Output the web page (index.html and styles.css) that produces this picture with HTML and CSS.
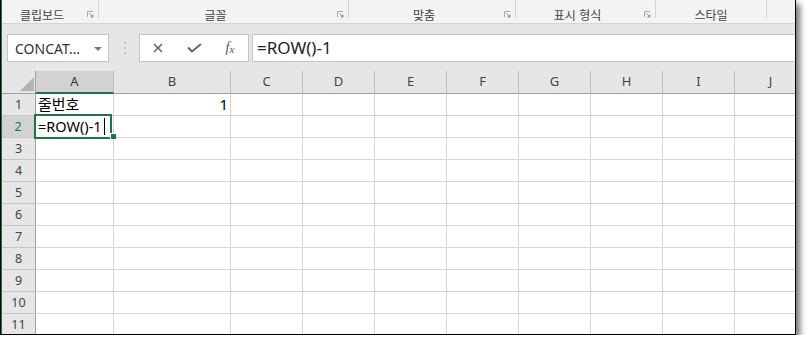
FILE: index.html
```html
<!DOCTYPE html>
<html lang="ko">
<head>
<meta charset="utf-8">
<title>Excel</title>
<link rel="stylesheet" href="styles.css">
</head>
<body>
<div class="frame">
 <div class="app">
  <div class="ribbon">
   <div class="group g1"><span class="glabel">클립보드</span><span class="launch"><svg width="7" height="7" viewBox="0 0 7 7"><path d="M0.5 6V0.5H6" fill="none" stroke="#a6a6a6"/><path d="M2.5 2.5L6 6M6 3.5V6H3.5" fill="none" stroke="#8a8a8a"/></svg></span></div>
   <div class="sep"></div>
   <div class="group g2"><span class="glabel">글꼴</span><span class="launch"><svg width="7" height="7" viewBox="0 0 7 7"><path d="M0.5 6V0.5H6" fill="none" stroke="#a6a6a6"/><path d="M2.5 2.5L6 6M6 3.5V6H3.5" fill="none" stroke="#8a8a8a"/></svg></span></div>
   <div class="sep"></div>
   <div class="group g3"><span class="glabel">맞춤</span><span class="launch"><svg width="7" height="7" viewBox="0 0 7 7"><path d="M0.5 6V0.5H6" fill="none" stroke="#a6a6a6"/><path d="M2.5 2.5L6 6M6 3.5V6H3.5" fill="none" stroke="#8a8a8a"/></svg></span></div>
   <div class="sep"></div>
   <div class="group g4"><span class="glabel">표시 형식</span><span class="launch"><svg width="7" height="7" viewBox="0 0 7 7"><path d="M0.5 6V0.5H6" fill="none" stroke="#a6a6a6"/><path d="M2.5 2.5L6 6M6 3.5V6H3.5" fill="none" stroke="#8a8a8a"/></svg></span></div>
   <div class="sep"></div>
   <div class="group g5"><span class="glabel">스타일</span></div>
   <div class="sep"></div>
   <div class="group rest"></div>
  </div>
  <div class="fbar">
   <div class="namebox"><span class="nbtext">CONCAT…</span><svg class="nbarrow" width="8" height="4" viewBox="0 0 8 4"><path d="M0 0H8L4 4Z" fill="#7a7a7a"/></svg></div>
   <div class="dots"><i></i><i></i><i></i></div>
   <div class="fbtns">
    <span class="fbtn"><svg width="10" height="10" viewBox="0 0 10 10"><path d="M1 1L9 9M9 1L1 9" stroke="#555" stroke-width="1.3" fill="none"/></svg></span>
    <span class="fbtn"><svg width="15" height="10" viewBox="0 0 15 10"><path d="M1 4.5L5 8.5L14 1" stroke="#666" stroke-width="2" fill="none"/></svg></span>
    <span class="fbtn"><span class="fx"><i>f</i><i class="fxx">x</i></span></span>
   </div>
   <div class="finput">=ROW()-1</div>
  </div>
  <div class="sheet">
   <div class="corner"><svg width="14" height="14" viewBox="0 0 14 14"><path d="M14 0V14H0Z" fill="#b4b4b4"/></svg></div>
   <div class="ch sel">A</div><div class="ch">B</div><div class="ch">C</div><div class="ch">D</div><div class="ch">E</div><div class="ch">F</div><div class="ch">G</div><div class="ch">H</div><div class="ch">I</div><div class="ch">J</div>

   <div class="rh">1</div><div class="c">줄번호</div><div class="c num">1</div><div class="c"></div><div class="c"></div><div class="c"></div><div class="c"></div><div class="c"></div><div class="c"></div><div class="c"></div><div class="c"></div>

   <div class="rh sel">2</div><div class="c active">=ROW()-1<span class="caret"></span><span class="selbox"></span><span class="handle"></span></div><div class="c"></div><div class="c"></div><div class="c"></div><div class="c"></div><div class="c"></div><div class="c"></div><div class="c"></div><div class="c"></div><div class="c"></div>

   <div class="rh">3</div><div class="c"></div><div class="c"></div><div class="c"></div><div class="c"></div><div class="c"></div><div class="c"></div><div class="c"></div><div class="c"></div><div class="c"></div><div class="c"></div>
   <div class="rh">4</div><div class="c"></div><div class="c"></div><div class="c"></div><div class="c"></div><div class="c"></div><div class="c"></div><div class="c"></div><div class="c"></div><div class="c"></div><div class="c"></div>
   <div class="rh">5</div><div class="c"></div><div class="c"></div><div class="c"></div><div class="c"></div><div class="c"></div><div class="c"></div><div class="c"></div><div class="c"></div><div class="c"></div><div class="c"></div>
   <div class="rh">6</div><div class="c"></div><div class="c"></div><div class="c"></div><div class="c"></div><div class="c"></div><div class="c"></div><div class="c"></div><div class="c"></div><div class="c"></div><div class="c"></div>
   <div class="rh">7</div><div class="c"></div><div class="c"></div><div class="c"></div><div class="c"></div><div class="c"></div><div class="c"></div><div class="c"></div><div class="c"></div><div class="c"></div><div class="c"></div>
   <div class="rh">8</div><div class="c"></div><div class="c"></div><div class="c"></div><div class="c"></div><div class="c"></div><div class="c"></div><div class="c"></div><div class="c"></div><div class="c"></div><div class="c"></div>
   <div class="rh">9</div><div class="c"></div><div class="c"></div><div class="c"></div><div class="c"></div><div class="c"></div><div class="c"></div><div class="c"></div><div class="c"></div><div class="c"></div><div class="c"></div>
   <div class="rh">10</div><div class="c"></div><div class="c"></div><div class="c"></div><div class="c"></div><div class="c"></div><div class="c"></div><div class="c"></div><div class="c"></div><div class="c"></div><div class="c"></div>
   <div class="rh">11</div><div class="c"></div><div class="c"></div><div class="c"></div><div class="c"></div><div class="c"></div><div class="c"></div><div class="c"></div><div class="c"></div><div class="c"></div><div class="c"></div>
  </div>
 </div>
</div>
</body>
</html>
```
FILE: styles.css
```css
html, body {
  margin: 0;
  padding: 0;
  background: #ffffff;
}

.frame {
  width: 796px;
  height: 335px;
  box-sizing: border-box;
  border-left: 1px solid #000;
  border-right: 1px solid #000;
  border-bottom: 1px solid #000;
  box-shadow: 4px 4px 6px rgba(0, 0, 0, 0.55);
  overflow: hidden;
}

.app {
  height: 100%;
  box-sizing: border-box;
  border-left: 1px solid #217346;
  background: #e6e6e6;
  display: flex;
  flex-direction: column;
  font-family: "Noto Sans", "Noto Sans CJK KR", sans-serif;
}

/* ribbon group labels */
.ribbon {
  height: 24px;
  flex: none;
  box-sizing: border-box;
  border-bottom: 1px solid #d5d5d5;
  background: #f3f3f3;
  display: flex;
  align-items: flex-start;
}

.group {
  display: flex;
  align-items: flex-start;
  height: 100%;
}

.g1 { width: 96px; }
.g2 { width: 249px; }
.g3 { width: 166px; }
.g4 { width: 139px; }
.g5 { width: 110px; }
.rest { flex: 1; }

.glabel {
  flex: 1;
  text-align: center;
  font-family: "Noto Sans CJK KR", sans-serif;
  font-size: 12px;
  line-height: 16px;
  padding-top: 7px;
  color: #444;
  white-space: nowrap;
}

.launch {
  width: 7px;
  height: 7px;
  margin: 11px 4px 0 5px;
  display: flex;
}

.sep {
  width: 1px;
  height: 18px;
  background: #d4d4d4;
  flex: none;
}

/* formula bar */
.fbar {
  height: 47px;
  flex: none;
  box-sizing: border-box;
  padding-top: 10px;
  display: flex;
  align-items: flex-start;
}

.namebox {
  margin-left: 5px;
  width: 102px;
  height: 28px;
  box-sizing: border-box;
  border: 1px solid #c6c6c6;
  background: #fff;
  display: flex;
  align-items: center;
}

.nbtext {
  flex: 1;
  padding-left: 7px;
  font-size: 14px;
  color: #333;
  white-space: nowrap;
}

.nbarrow {
  margin-right: 6px;
  margin-top: 1px;
}

.dots {
  margin-left: 14px;
  width: 3px;
  height: 28px;
  display: flex;
  flex-direction: column;
  align-items: center;
  justify-content: center;
  gap: 3px;
}

.dots i {
  display: block;
  width: 2px;
  height: 2px;
  background: #bdbdbd;
}

.fbtns {
  margin-left: 13px;
  height: 28px;
  box-sizing: border-box;
  border: 1px solid #c6c6c6;
  background: #fff;
  display: flex;
  align-items: center;
}

.fbtn {
  width: 36px;
  height: 26px;
  display: flex;
  align-items: center;
  justify-content: center;
}

.fx {
  font-family: "Liberation Serif", serif;
  font-size: 14px;
  color: #555;
  line-height: 1;
}

.fx i {
  font-style: italic;
}

.fxx {
  font-size: 11px;
  position: relative;
  top: 1px;
}

.finput {
  flex: 1;
  margin-left: 3px;
  height: 28px;
  box-sizing: border-box;
  border: 1px solid #c6c6c6;
  border-right: none;
  background: #fff;
  padding-left: 4px;
  font-size: 17px;
  line-height: 25px;
  color: #222;
  white-space: nowrap;
}

/* sheet grid */
.sheet {
  flex: 1;
  display: grid;
  grid-template-columns: 34px 78px 117px repeat(8, 72px);
  grid-template-rows: 23px repeat(11, 22px);
  background: #fff;
  overflow: hidden;
}

.corner {
  background: #e6e6e6;
  border-right: 1px solid #a0a0a0;
  border-bottom: 1px solid #a0a0a0;
  box-sizing: border-box;
  display: flex;
  align-items: flex-end;
  justify-content: flex-end;
  padding: 0 1px 2px 0;
}

.ch {
  background: #e6e6e6;
  border-right: 1px solid #bfbfbf;
  border-bottom: 1px solid #9f9f9f;
  box-sizing: border-box;
  text-align: center;
  font-size: 13px;
  line-height: 21px;
  color: #444;
}

.ch.sel {
  background: #d2d2d2;
  border-bottom: 2px solid #217346;
  color: #3a3a3a;
}

.rh {
  background: #e6e6e6;
  border-right: 1px solid #a0a0a0;
  border-bottom: 1px solid #c6c6c6;
  box-sizing: border-box;
  text-align: center;
  font-size: 12.5px;
  line-height: 22px;
  color: #444;
}

.rh.sel {
  background: #d2d2d2;
  border-right: 2px solid #217346;
  color: #217346;
}

.c {
  border-right: 1px solid #d4d4d4;
  border-bottom: 1px solid #d4d4d4;
  box-sizing: border-box;
  padding: 0 2px;
  font-family: "Noto Sans", "Noto Sans CJK KR", sans-serif;
  font-size: 15px;
  line-height: 20px;
  color: #000;
  white-space: nowrap;
}

.c.num {
  text-align: right;
}

.c.active {
  position: relative;
  font-size: 14.5px;
}

.caret {
  position: absolute;
  left: 68px;
  top: 2px;
  width: 1px;
  height: 17px;
  background: #000;
}

.selbox {
  position: absolute;
  left: -2px;
  top: -2px;
  width: 78px;
  height: 25px;
  box-sizing: border-box;
  border: 2px solid #217346;
}

.handle {
  position: absolute;
  left: 74px;
  top: 17px;
  width: 5px;
  height: 5px;
  background: #217346;
  border-left: 1px solid #fff;
  border-top: 1px solid #fff;
}
```
